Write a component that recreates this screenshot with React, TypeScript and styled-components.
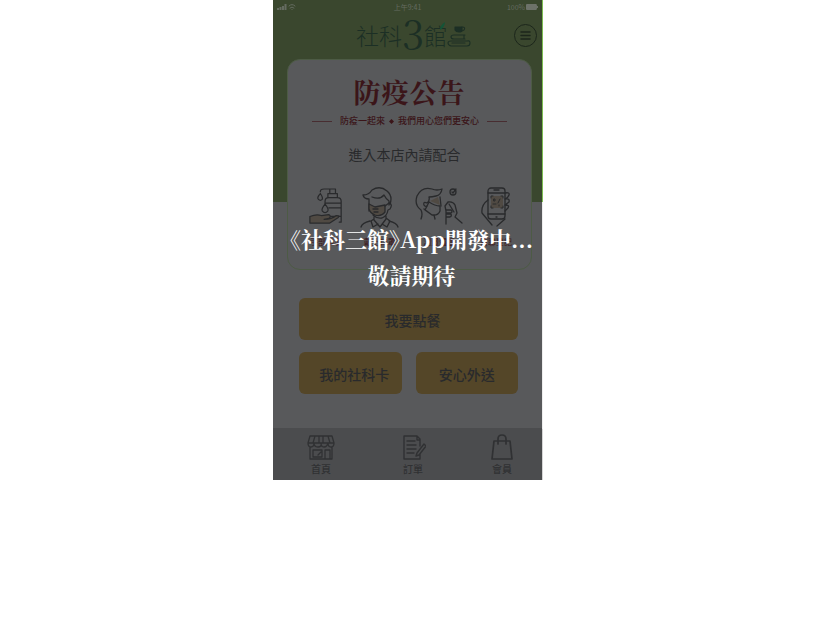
import React from "react";
import styled, { createGlobalStyle } from "styled-components";

const sans = `"Noto Sans CJK TC", "Noto Sans", sans-serif`;
const serif = `"Noto Serif CJK TC", "Liberation Serif", "Noto Sans CJK TC", serif`;
const ink = "#292a2c";
const forest = "#1c2f25";
const wine = "#3b1519";

const Global = createGlobalStyle`
  * { box-sizing: border-box; }
  body { margin: 0; background: #fff; font-family: ${sans}; }
  h1, h2, p { margin: 0; }
  button, a { font: inherit; color: inherit; text-decoration: none; }
  svg { display: block; flex: none; fill: none; stroke-linecap: round; stroke-linejoin: round; }
`;

const Phone = styled.main`
  position: relative;
  width: 100%;
  max-width: 270px;
  margin: 0 auto;
  border-right: 1px solid;
  border-image: linear-gradient(#7dbd52 0 202px, #ededed 202px 428px, #d5d5d5 428px) 1;
  background: linear-gradient(#3a472e 202px, #58595b 202px);
  color: ${ink};
`;

const StatusBar = styled.div`
  display: grid;
  grid-template-columns: 1fr auto 1fr;
  align-items: center;
  height: 13px;
  padding: 0 3px;
  font-size: 7px;
  line-height: 12px;
  color: #646b60;
`;

const StatusEnd = styled.span`
  display: flex;
  justify-content: flex-end;
  align-items: center;
  gap: 1px;
`;

const Header = styled.header`
  display: grid;
  grid-template-columns: 1fr auto 1fr;
  align-items: center;
  height: 46px;
  padding: 0 5px 2px;
`;

const Logo = styled.h1`
  grid-column: 2;
  display: flex;
  align-items: center;
  padding-left: 12px;
  color: ${forest};
  font-size: 23px;
  font-weight: 300;
  line-height: 44px;
`;

const LogoNumber = styled.span`
  padding-bottom: 6px;
  font-family: ${serif};
  font-size: 40px;
  font-weight: 400;
  line-height: 38px;
`;

const LogoEnd = styled.span`
  position: relative;
`;

const LeafMark = styled.svg`
  position: absolute;
  top: 9px;
  right: 2px;
`;

const MenuButton = styled.button`
  justify-self: end;
  display: grid;
  place-items: center;
  width: 23px;
  height: 23px;
  padding: 0;
  border: 1px solid #1c261b;
  border-radius: 50%;
  background: none;
`;

const Notice = styled.section`
  display: flex;
  flex-direction: column;
  align-items: center;
  height: 211px;
  margin: 0 10px 0 14px;
  padding-top: 14px;
  border: 1px solid #4d5b45;
  border-radius: 13px;
  background: #58595b;
`;

const NoticeTitle = styled.h2`
  font-family: ${serif};
  font-size: 27px;
  line-height: 36px;
  letter-spacing: 1px;
  color: ${wine};
`;

const Tagline = styled.p`
  display: flex;
  align-items: center;
  justify-content: center;
  gap: 8px;
  width: 100%;
  margin-top: 4px;
  font-size: 9px;
  font-weight: 500;
  line-height: 14px;
  white-space: nowrap;
  color: ${wine};
`;

const TaglineText = styled.span`
  display: flex;
  align-items: center;
  gap: 4px;
`;

const Rule = styled.span`
  width: 20px;
  height: 1px;
  background: #482d31;
`;

const Request = styled.p`
  margin: 16px 10px 0 0;
  font-size: 14px;
  line-height: 20px;
`;

const Measures = styled.div`
  display: flex;
  justify-content: space-between;
  width: 100%;
  margin-top: 22px;
  padding: 0 18px 0 20px;
`;

const Measure = styled.div`
  display: flex;
  flex-direction: column;
  align-items: center;
  gap: 8px;
  font-size: 8px;
  line-height: 12px;
  color: ${wine};
`;

const Dots = styled.div`
  display: flex;
  justify-content: center;
  gap: 11px;
  height: 28px;
  padding: 11px 0 0 14px;
`;

const Dot = styled.span<{ $active?: boolean }>`
  width: 4px;
  height: 4px;
  border-radius: 50%;
  background: ${(p) => (p.$active ? "#1d4a18" : "#48494b")};
`;

const Actions = styled.div`
  display: grid;
  grid-template-columns: 1fr 1fr;
  gap: 12px 14px;
  padding: 0 24px 34px 26px;
`;

const Action = styled.button<{ $wide?: boolean; $centered?: boolean }>`
  grid-column: ${(p) => (p.$wide ? "1 / -1" : "auto")};
  height: 42px;
  padding: 1px 0 0 ${(p) => (p.$centered ? "0" : "8px")};
  border: 0;
  border-radius: 6px;
  background: #544628;
  font-size: 14px;
  font-weight: 500;
`;

const Tabs = styled.nav`
  display: flex;
  justify-content: space-between;
  height: 52px;
  padding: 6px 28px 0 33px;
  background: #4b4c4e;
`;

const Tab = styled.a`
  display: flex;
  flex-direction: column;
  align-items: center;
  && { font-size: 10px; font-weight: 500; line-height: 14px; color: #303133; }
`;

const Overlay = styled.div`
  position: absolute;
  inset: 0;
  display: flex;
  flex-direction: column;
  justify-content: center;
  align-items: center;
  padding: 34px 0 0 8px;
  pointer-events: none;
  font-family: ${serif};
  font-feature-settings: "halt";
  font-size: 22px;
  font-weight: 700;
  line-height: 36px;
  white-space: nowrap;
  color: #fff;
`;

const Books = () => (
  <svg width="24" height="24" viewBox="0 0 24 24" stroke={forest} strokeWidth="1.1">
    <path d="M8 4h7v3q0 2-3 2t-4-2z" fill={forest} />
    <path d="M15 4q4 0 2 3l-2 1" />
    <path d="M18 12H7q-3 0-3 2t3 2h11M17 12v4M21 18H4q-3 0-3 2t3 3h16q3 0 3-3t-3-2M5 20h13" />
  </svg>
);
const Leaf = () => (
  <LeafMark width="5" height="8" viewBox="0 0 5 8"><path d="M0 8Q0 3 5 0Q5 5 0 8" fill="#145437" /></LeafMark>
);

const Sanitizer = () => (
  <svg width="36" height="42" viewBox="0 0 38 42" stroke={ink} strokeWidth="1.3">
    <path d="M23 7V2h6v5M23 2h-6q-4 0-4 3M21 7h10v4H21zM18 18v-3q0-4 4-4h9q4 0 4 4v22h-2M19 17h16M22 22h13M22 31h12" />
    <path d="M13 7q-4 4-2 6q2 2 4 0q1-2-2-6M18 18q-4 5-3 7q3 4 6 0q1-2-3-7" />
    <path d="M2 31q7-3 12-1l8-1q3 2 0 4l-5 1q8 0 13-4q4 0 2 2l-9 6H2z" fill="#504a43" />
  </svg>
);
const MaskedMan = () => (
  <svg width="40" height="42" viewBox="0 0 40 42" stroke={ink} strokeWidth="1.3">
    <path d="M9 17v-4q-5 0-6-4q6 0 9-5q8-5 15 1q6 5 3 13M12 11q8 3 12-2q2 4 5 6v4M9 17v8M29 17q4 1 1 6l-2 1q-1 6-6 8q-5 1-9-3M14 31v3l6 7l6-8v-3M14 33l-3 2l2 6l5-3M26 32l4 3l-3 6l-5-3M10 35q-8 2-9 6M29 35q8 2 9 6" />
    <path d="M9 18l6 3l10-2v7q-4 5-10 3q-5-2-6-6z" fill="#504a43" /><path d="M13 23h5M14 26h4M25 20l4-3" />
  </svg>
);
const Cough = () => (
  <svg width="48" height="42" viewBox="0 0 48 42" stroke={ink} strokeWidth="1.3">
    <path d="M15 15l8-4l2 8z" fill="#504a43" stroke="none" />
    <path d="M6 33q2-5 0-9Q-1 19 2 10Q7 0 17 3q5 2 10 0q-1 6-6 7q-4 1-7 1q1 4-2 6q-4-2-3 2q1 2 3 1M25 11l1 9M19 29l1 4" />
    <path d="M14 16q6 4 11 4v5q-2 5-8 4l-7-5zM9 23l8 6" />
    <circle cx="38" cy="6" r="3" /><path d="M37 6l1 1l3-4M31 38V25l-1-5l3-4q5-1 7 3l2 8l-2 4l7 6M34 18l5 8M31 24h5q2 2 0 3h-5M31 28h5q1 2-1 3h-4" />
  </svg>
);
const ScanPhone = () => (
  <svg width="34" height="42" viewBox="0 0 34 42" stroke={ink} strokeWidth="1.3">
    <path d="M12 10h12v12H12z" fill="#504a43" stroke="none" />
    <rect x="9" y="2" width="17" height="31" rx="3" />
    <path d="M15 4h5M9 7h17M9 28h17M17 31h1M9 14Q2 19 3 27l10 12M18 40l8-7M26 7q5-1 4 2t-4 4q5-1 4 3l-4 3q5 0 3 3l-3 3" />
    <path d="M12 12v-2h2M22 10h2v2M12 20v2h2M22 22h2v-2M15 13h1v2h-1zM21 13l-2 4M14 18h3M20 19v1" strokeWidth="1" />
  </svg>
);
const Shop = () => (
  <svg width="30" height="28" viewBox="0 0 30 28" stroke="#303133" strokeWidth="1.3">
    <path d="M4 2h22l2 7H2zM9 2l-2 7M13 2v7M17 2v7M22 2l2 7M2 9q0 4 3 4t3-4q0 4 4 4t3-4q0 4 3 4t4-4q0 4 3 4t3-4M4 13v12h22V13M7 16h9v7H7zM19 25v-9h5v9M12 21l3-3M4 25h22" />
  </svg>
);
const Order = () => (
  <svg width="26" height="28" viewBox="-2 0 26 28" stroke="#303133" strokeWidth="1.4">
    <path d="M18 20v5H2V2h13l3 3v7M15 2v4h3M5 7h8M5 11h9M5 15h9M5 19h7M15 19l7-9l2 2l-7 9l-3 1z" />
  </svg>
);
const Bag = () => (
  <svg width="24" height="28" viewBox="0 0 24 28" stroke="#303133" strokeWidth="1.7">
    <path d="M4 7h16l2 18H2zM8 10V5q0-4 4-4t4 4v5" />
  </svg>
);

export default function App() {
  return (
    <>
      <Global />
      <Phone>
        <StatusBar>
          <svg width="22" height="8" viewBox="0 0 22 8" stroke="#646b60">
            <path d="M2 5v2M4.500 4v3M7 3v4M9.500 1v6" strokeWidth="2" strokeLinecap="butt" />
            <path d="M13 3q3-3 6 0M14 5q2-2 4 0M16 6.500v.1" />
          </svg>
          <span>上午9:41</span>
          <StatusEnd>
            100%
            <svg width="13" height="6" viewBox="0 0 13 6"><path d="M1 0h9q1 0 1 2h1v2h-1q0 2-1 2H1q-1 0-1-1V1q0-1 1-1" fill="#6d7269" /></svg>
          </StatusEnd>
        </StatusBar>
        <Header>
          <Logo>社科<LogoNumber>3</LogoNumber><LogoEnd>館<Leaf /></LogoEnd><Books /></Logo>
          <MenuButton aria-label="選單">
            <svg width="11" height="9" viewBox="0 0 11 9" stroke="#1c261b" strokeWidth="1.5"><path d="M1 1h9M1 4.500h9M1 8h9" /></svg>
          </MenuButton>
        </Header>
        <Notice>
          <NoticeTitle>防疫公告</NoticeTitle>
          <Tagline>
            <Rule />
            <TaglineText>
              防疫一起來
              <svg width="5" height="5" viewBox="0 0 5 5"><path d="M2.500 0L5 2.500L2.500 5L0 2.500z" fill={wine} /></svg>
              我們用心您們更安心
            </TaglineText>
            <Rule />
          </Tagline>
          <Request>進入本店內請配合</Request>
          <Measures>
            <Measure><Sanitizer />手部消毒</Measure>
            <Measure><MaskedMan />戴上口罩</Measure>
            <Measure><Cough />測量體溫</Measure>
            <Measure><ScanPhone />實聯登記</Measure>
          </Measures>
        </Notice>
        <Dots><Dot $active /><Dot /><Dot /><Dot /></Dots>
        <Actions>
          <Action $wide>我要點餐</Action>
          <Action>我的社科卡</Action>
          <Action $centered>安心外送</Action>
        </Actions>
        <Tabs>
          <Tab href="#home"><Shop />首頁</Tab>
          <Tab href="#orders"><Order />訂單</Tab>
          <Tab href="#member"><Bag />會員</Tab>
        </Tabs>
        <Overlay role="status"><p>《社科三館》App開發中...</p><p>敬請期待</p></Overlay>
      </Phone>
    </>
  );
}
